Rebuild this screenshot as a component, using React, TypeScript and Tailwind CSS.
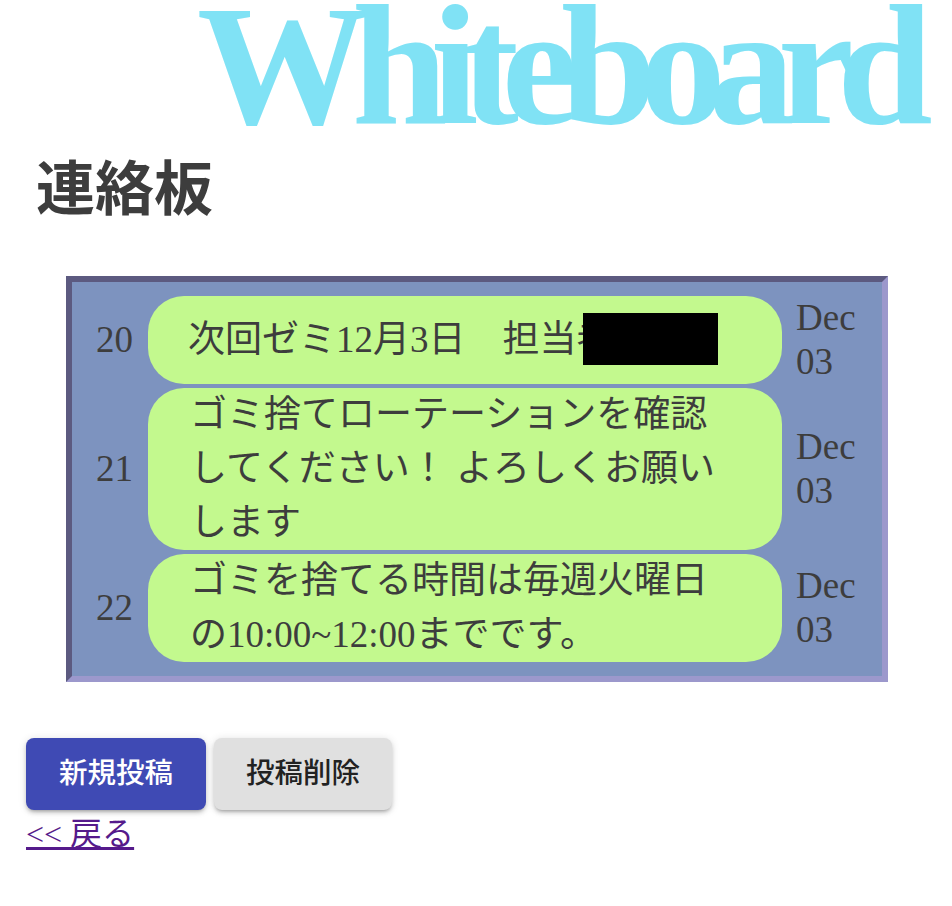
const serif = "font-['Liberation_Serif','Noto_Sans_CJK_JP',serif]";

const posts = [
  { id: 20, h: "h-[88px]", pl: "pl-[40px]", lines: ["次回ゼミ12月3日　担当者"], redacted: true },
  { id: 21, h: "h-[162px]", pl: "pl-[42px]", lines: ["ゴミ捨てローテーションを確認", "してください！ よろしくお願い", "します"] },
  { id: 22, h: "h-[108px]", pl: "pl-[42px]", lines: ["ゴミを捨てる時間は毎週火曜日", "の10:00~12:00までです。"] },
];

export default function App() {
  return (
    <div className={`${serif} h-[906px] w-[952px] overflow-hidden bg-white text-[#3d3d3d]`}>
      <h1 className="h-[133px] pl-[197px] text-[172px] leading-[131px] font-bold tracking-[-17px] whitespace-nowrap text-[#80e2f5]">
        Whiteboard
      </h1>
      <h2 className="mt-[22px] ml-[36px] text-[59px] leading-[70px] font-bold">連絡板</h2>

      <div className="mt-[51px] ml-[66px] w-[822px] border-[6px] border-t-[#5c5a80] border-r-[#9c98cc] border-b-[#9c98cc] border-l-[#5c5a80] bg-[#7d93bf] px-[24px] pt-[14px] pb-[14px]">
        <div className="flex flex-col gap-[4px]">
          {posts.map((p) => (
            <div key={p.id} className="flex items-center">
              <div className="w-[52px] text-[37px] leading-[44px]">{p.id}</div>
              <div className={`relative ${p.h} ${p.pl} flex w-[634px] flex-col justify-center rounded-[36px] bg-[#c3f98e] pr-[60px] text-[37px] leading-[54px] whitespace-nowrap`}>
                {p.lines.map((l) => (
                  <div key={l}>{l}</div>
                ))}
                {p.redacted && <div className="absolute top-[17px] left-[435px] h-[52px] w-[135px] bg-black" />}
              </div>
              <div className="ml-[14px] text-[37px] leading-[44px]">
                Dec
                <br />
                03
              </div>
            </div>
          ))}
        </div>
      </div>

      <div className="mt-[56px] ml-[26px] flex gap-[8px] font-['Roboto','Noto_Sans_CJK_JP',sans-serif] text-[28.5px] font-medium">
        <button className="h-[72px] w-[180px] rounded-[8px] bg-[#3f4ab4] pt-[1px] text-white shadow-[0_3px_3px_-2px_rgba(0,0,0,0.2),0_3px_4px_0_rgba(0,0,0,0.14),0_1px_8px_0_rgba(0,0,0,0.12)]">
          新規投稿
        </button>
        <button className="h-[72px] w-[178px] rounded-[8px] bg-[#e0e0e0] pt-[1px] text-[#222222] shadow-[0_3px_3px_-2px_rgba(0,0,0,0.2),0_3px_4px_0_rgba(0,0,0,0.14),0_1px_8px_0_rgba(0,0,0,0.12)]">
          投稿削除
        </button>
      </div>
      <a href="#" className="ml-[26px] block w-fit text-[32px] leading-[48px] text-[#551a8b] underline">
        &lt;&lt; 戻る
      </a>
    </div>
  );
}
